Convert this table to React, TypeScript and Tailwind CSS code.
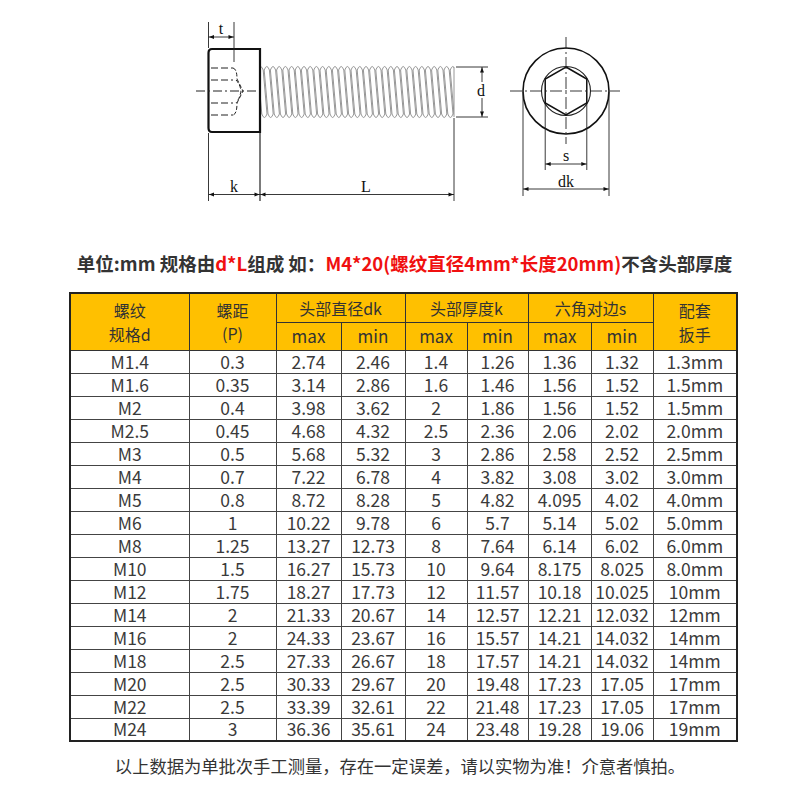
import React from "react";

const rows: string[][] = [
  ["M1.4", "0.3", "2.74", "2.46", "1.4", "1.26", "1.36", "1.32", "1.3mm"],
  ["M1.6", "0.35", "3.14", "2.86", "1.6", "1.46", "1.56", "1.52", "1.5mm"],
  ["M2", "0.4", "3.98", "3.62", "2", "1.86", "1.56", "1.52", "1.5mm"],
  ["M2.5", "0.45", "4.68", "4.32", "2.5", "2.36", "2.06", "2.02", "2.0mm"],
  ["M3", "0.5", "5.68", "5.32", "3", "2.86", "2.58", "2.52", "2.5mm"],
  ["M4", "0.7", "7.22", "6.78", "4", "3.82", "3.08", "3.02", "3.0mm"],
  ["M5", "0.8", "8.72", "8.28", "5", "4.82", "4.095", "4.02", "4.0mm"],
  ["M6", "1", "10.22", "9.78", "6", "5.7", "5.14", "5.02", "5.0mm"],
  ["M8", "1.25", "13.27", "12.73", "8", "7.64", "6.14", "6.02", "6.0mm"],
  ["M10", "1.5", "16.27", "15.73", "10", "9.64", "8.175", "8.025", "8.0mm"],
  ["M12", "1.75", "18.27", "17.73", "12", "11.57", "10.18", "10.025", "10mm"],
  ["M14", "2", "21.33", "20.67", "14", "12.57", "12.21", "12.032", "12mm"],
  ["M16", "2", "24.33", "23.67", "16", "15.57", "14.21", "14.032", "14mm"],
  ["M18", "2.5", "27.33", "26.67", "18", "17.57", "14.21", "14.032", "14mm"],
  ["M20", "2.5", "30.33", "29.67", "20", "19.48", "17.23", "17.05", "17mm"],
  ["M22", "2.5", "33.39", "32.61", "22", "21.48", "17.23", "17.05", "17mm"],
  ["M24", "3", "36.36", "35.61", "24", "23.48", "19.28", "19.06", "19mm"],
];

const widths = [119, 87, 65, 64, 62, 61, 63, 62, 84];

function Arrow({ x, y, dir }: { x: number; y: number; dir: "l" | "r" | "u" | "d" }) {
  const s = 5;
  const w = 2;
  let pts = "";
  if (dir === "l") pts = `${x},${y} ${x + s},${y - w} ${x + s},${y + w}`;
  if (dir === "r") pts = `${x},${y} ${x - s},${y - w} ${x - s},${y + w}`;
  if (dir === "u") pts = `${x},${y} ${x - w},${y + s} ${x + w},${y + s}`;
  if (dir === "d") pts = `${x},${y} ${x - w},${y - s} ${x + w},${y - s}`;
  return <polygon points={pts} fill="#111" />;
}

function Figure() {
  const threads: React.ReactNode[] = [];
  const pitch = 6.2;
  for (let i = -1; i < 33; i++) {
    const x0 = 258 + i * pitch;
    threads.push(
      <path
        key={i}
        d={`M${x0},70 Q${x0 + 2.6},63 ${x0 + 5.2},70 L${x0 + 9},114 Q${x0 + 6.4},121 ${x0 + 3.8},114 Z`}
        fill="none"
        stroke="#8a8a8a"
        strokeWidth="0.9"
      />
    );
  }
  const serif = { fontFamily: '"Liberation Serif", "DejaVu Serif", serif' };
  const cx = 566;
  const cy = 91;
  const hr = 24;
  const hx = hr * Math.cos(Math.PI / 6);
  const hex = [
    [cx, cy - hr],
    [cx + hx, cy - hr / 2],
    [cx + hx, cy + hr / 2],
    [cx, cy + hr],
    [cx - hx, cy + hr / 2],
    [cx - hx, cy - hr / 2],
  ]
    .map((p) => p.join(","))
    .join(" ");
  return (
    <svg width="800" height="240" viewBox="0 0 800 240" className="block">
      <defs>
        <clipPath id="thr">
          <rect x="261" y="60" width="193" height="64" />
        </clipPath>
      </defs>
      <g clipPath="url(#thr)">{threads}</g>
      <line x1="454" y1="67" x2="454" y2="117" stroke="#8a8a8a" strokeWidth="0.9" />
      <path
        d="M212,49 L260,49 L260,132 L212,132 Q208.5,132 208.5,128 L208.5,53 Q208.5,49 212,49 Z"
        fill="#fff"
        stroke="#111"
        strokeWidth="2.2"
      />
      <g stroke="#222" strokeWidth="1" fill="none" strokeDasharray="7 3">
        <line x1="211" y1="68" x2="233" y2="68" />
        <line x1="211" y1="80" x2="233" y2="80" />
        <line x1="211" y1="103" x2="233" y2="103" />
        <line x1="211" y1="115" x2="233" y2="115" />
      </g>
      <g stroke="#222" strokeWidth="1" fill="none" strokeDasharray="4 2">
        <path d="M233,68 Q237,69 237,79 L243,91 L237,103 Q237,114 233,115" />
        <path d="M236,80 Q240,84 241,91 Q240,98 236,103" />
      </g>
      <line x1="196" y1="91" x2="258" y2="91" stroke="#222" strokeWidth="1" strokeDasharray="9 3 2 3" />
      <line x1="208.5" y1="22" x2="208.5" y2="48" stroke="#222" strokeWidth="0.9" />
      <line x1="234" y1="22" x2="234" y2="62" stroke="#222" strokeWidth="0.9" />
      <line x1="208.5" y1="37" x2="234" y2="37" stroke="#222" strokeWidth="0.9" />
      <Arrow x={209} y={37} dir="l" />
      <Arrow x={233.5} y={37} dir="r" />
      <text x="221" y="34" textAnchor="middle" fontSize="16" fill="#111" style={serif}>
        t
      </text>
      <line x1="456" y1="67" x2="488" y2="67" stroke="#222" strokeWidth="0.9" />
      <line x1="456" y1="117" x2="488" y2="117" stroke="#222" strokeWidth="0.9" />
      <line x1="482" y1="67" x2="482" y2="117" stroke="#222" strokeWidth="0.9" />
      <Arrow x={482} y={67.5} dir="u" />
      <Arrow x={482} y={116.5} dir="d" />
      <rect x="474" y="82" width="14" height="16" fill="#fff" />
      <text x="481" y="96" textAnchor="middle" fontSize="16" fill="#111" style={serif}>
        d
      </text>
      <line x1="208.5" y1="133" x2="208.5" y2="201" stroke="#222" strokeWidth="0.9" />
      <line x1="260" y1="133" x2="260" y2="201" stroke="#222" strokeWidth="1.2" />
      <line x1="454" y1="118" x2="454" y2="201" stroke="#222" strokeWidth="0.9" />
      <line x1="208.5" y1="194.5" x2="454" y2="194.5" stroke="#222" strokeWidth="0.9" />
      <Arrow x={209} y={194.5} dir="l" />
      <Arrow x={259.5} y={194.5} dir="r" />
      <Arrow x={260.5} y={194.5} dir="l" />
      <Arrow x={453.5} y={194.5} dir="r" />
      <text x="234" y="192" textAnchor="middle" fontSize="16" fill="#111" style={serif}>
        k
      </text>
      <text x="366" y="192" textAnchor="middle" fontSize="16" fill="#111" style={serif}>
        L
      </text>
      <circle cx={cx} cy={cy} r="43" fill="none" stroke="#111" strokeWidth="1.6" />
      <circle cx={cx} cy={cy} r="24.5" fill="none" stroke="#222" strokeWidth="1.1" />
      <polygon points={hex} fill="none" stroke="#111" strokeWidth="1.5" />
      <line x1="510" y1={cy} x2="620" y2={cy} stroke="#222" strokeWidth="0.9" strokeDasharray="12 3 2 3" />
      <line x1={cx} y1="37" x2={cx} y2="144" stroke="#222" strokeWidth="0.9" strokeDasharray="12 3 2 3" />
      <line x1={cx - hx} y1="104" x2={cx - hx} y2="170" stroke="#222" strokeWidth="0.9" />
      <line x1={cx + hx} y1="104" x2={cx + hx} y2="170" stroke="#222" strokeWidth="0.9" />
      <line x1={cx - hx} y1="164" x2={cx + hx} y2="164" stroke="#222" strokeWidth="0.9" />
      <Arrow x={cx - hx + 0.5} y={164} dir="l" />
      <Arrow x={cx + hx - 0.5} y={164} dir="r" />
      <text x={cx} y="161" textAnchor="middle" fontSize="16" fill="#111" style={serif}>
        s
      </text>
      <line x1="523" y1="92" x2="523" y2="196" stroke="#222" strokeWidth="0.9" />
      <line x1="609" y1="92" x2="609" y2="196" stroke="#222" strokeWidth="0.9" />
      <line x1="523" y1="189" x2="609" y2="189" stroke="#222" strokeWidth="0.9" />
      <Arrow x={523.5} y={189} dir="l" />
      <Arrow x={608.5} y={189} dir="r" />
      <text x={cx} y="187" textAnchor="middle" fontSize="16" fill="#111" style={serif}>
        dk
      </text>
    </svg>
  );
}

export default function App() {
  const font = { fontFamily: '"Noto Sans CJK SC", "Noto Sans", sans-serif' };
  const th = "border border-[#333] bg-[#FFC000] font-normal text-[#333] text-center align-middle p-0";
  const td = "border border-[#444] text-center align-middle p-0 text-[#3a3a3a]";
  return (
    <div className="w-[800px] h-[800px] bg-white overflow-hidden" style={font}>
      <Figure />
      <div className="mt-[8px] h-[30px] flex items-center justify-center text-[18.5px] font-bold text-[#333] leading-[30px] pl-[9px]">
        <span>单位:mm 规格由</span>
        <span className="text-[#f01010]">d*L</span>
        <span>组成 如：</span>
        <span className="text-[#f01010]">M4*20(螺纹直径4mm*长度20mm)</span>
        <span>不含头部厚度</span>
      </div>
      <table className="mt-[14px] ml-[69px] border-collapse border-2 border-[#222] table-fixed" style={{ width: 667 }}>
        <colgroup>
          {widths.map((w, i) => (
            <col key={i} style={{ width: w }} />
          ))}
        </colgroup>
        <thead>
          <tr className="h-[29px]">
            <th rowSpan={2} className={th + " text-[16px] leading-[24px]"}>
              螺纹
              <br />
              规格d
            </th>
            <th rowSpan={2} className={th + " text-[16px] leading-[23px]"}>
              螺距
              <br />
              (P)
            </th>
            <th colSpan={2} className={th + " text-[16px]"}>
              头部直径dk
            </th>
            <th colSpan={2} className={th + " text-[16px]"}>
              头部厚度k
            </th>
            <th colSpan={2} className={th + " text-[16px]"}>
              六角对边s
            </th>
            <th rowSpan={2} className={th + " text-[16px] leading-[24px]"}>
              配套
              <br />
              扳手
            </th>
          </tr>
          <tr className="h-[28px]">
            <th className={th + " text-[17px]"}>max</th>
            <th className={th + " text-[17px]"}>min</th>
            <th className={th + " text-[17px]"}>max</th>
            <th className={th + " text-[17px]"}>min</th>
            <th className={th + " text-[17px]"}>max</th>
            <th className={th + " text-[17px]"}>min</th>
          </tr>
        </thead>
        <tbody>
          {rows.map((r, i) => (
            <tr key={i} className="h-[23px]">
              {r.map((c, j) => (
                <td key={j} className={td + " text-[17.5px] leading-[20px]"}>
                  {c}
                </td>
              ))}
            </tr>
          ))}
        </tbody>
      </table>
      <div className="mt-[11px] text-center text-[17.3px] leading-[26px] text-[#333]">
        以上数据为单批次手工测量，存在一定误差，请以实物为准！介意者慎拍。
      </div>
    </div>
  );
}
